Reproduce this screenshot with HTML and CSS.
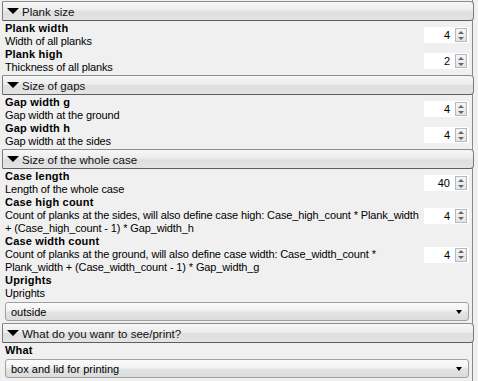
FILE: index.html
```html
<!DOCTYPE html>
<html>
<head>
<meta charset="utf-8">
<link rel="stylesheet" href="styles.css">
</head>
<body>
<div class="panel">
  <div class="section">
    <div class="head"><span class="tri"></span>Plank size</div>
    <div class="body">
      <div class="row">
        <div class="lbl"><div class="name">Plank width</div><div class="desc">Width of all planks</div></div>
        <div class="spin"><span class="val">4</span><span class="btns"><span class="up"></span><span class="dn"></span></span></div>
      </div>
      <div class="row">
        <div class="lbl"><div class="name">Plank high</div><div class="desc">Thickness of all planks</div></div>
        <div class="spin"><span class="val">2</span><span class="btns"><span class="up"></span><span class="dn"></span></span></div>
      </div>
    </div>
  </div>
  <div class="section">
    <div class="head"><span class="tri"></span>Size of gaps</div>
    <div class="body">
      <div class="row">
        <div class="lbl"><div class="name">Gap width g</div><div class="desc">Gap width at the ground</div></div>
        <div class="spin"><span class="val">4</span><span class="btns"><span class="up"></span><span class="dn"></span></span></div>
      </div>
      <div class="row">
        <div class="lbl"><div class="name">Gap width h</div><div class="desc">Gap width at the sides</div></div>
        <div class="spin"><span class="val">4</span><span class="btns"><span class="up"></span><span class="dn"></span></span></div>
      </div>
    </div>
  </div>
  <div class="section">
    <div class="head"><span class="tri"></span>Size of the whole case</div>
    <div class="body">
      <div class="row">
        <div class="lbl"><div class="name">Case length</div><div class="desc">Length of the whole case</div></div>
        <div class="spin"><span class="val">40</span><span class="btns"><span class="up"></span><span class="dn"></span></span></div>
      </div>
      <div class="row">
        <div class="lbl"><div class="name">Case high count</div><div class="desc">Count of planks at the sides, will also define case high: Case_high_count * Plank_width<br>+ (Case_high_count - 1) * Gap_width_h</div></div>
        <div class="spin"><span class="val">4</span><span class="btns"><span class="up"></span><span class="dn"></span></span></div>
      </div>
      <div class="row">
        <div class="lbl"><div class="name">Case width count</div><div class="desc">Count of planks at the ground, will also define case width: Case_width_count *<br>Plank_width + (Case_width_count - 1) * Gap_width_g</div></div>
        <div class="spin"><span class="val">4</span><span class="btns"><span class="up"></span><span class="dn"></span></span></div>
      </div>
      <div class="row col">
        <div class="lbl"><div class="name">Uprights</div><div class="desc">Uprights</div></div>
        <div class="combo">outside<span class="arrow"></span></div>
      </div>
    </div>
  </div>
  <div class="section">
    <div class="head"><span class="tri"></span>What do you wanr to see/print?</div>
    <div class="body">
      <div class="row col">
        <div class="lbl"><div class="name">What</div></div>
        <div class="combo">box and lid for printing<span class="arrow"></span></div>
      </div>
    </div>
  </div>
</div>
</body>
</html>
```

FILE: styles.css
```css
html, body {
  margin: 0;
  padding: 0;
  background: #f0f0f0;
}
body {
  font-family: "Liberation Sans", Arial, sans-serif;
  font-size: 11px;
  color: #000;
  width: 478px;
  height: 381px;
  overflow: hidden;
}
.panel {
  width: 471px;
  margin-left: 2px;
  border-right: 1px solid #8a8a8a;
  height: 381px;
  padding-top: 1px;
  box-sizing: border-box;
}
.head {
  height: 20px;
  box-sizing: border-box;
  border: 1px solid #7a7a7a;
  border-top-color: #8c8c8c;
  border-bottom-color: #5e5e5e;
  border-radius: 1px 4px 4px 1px;
  margin-right: -2px;
  background: linear-gradient(#f7f7f7, #ececec 45%, #dedede 55%, #e4e4e4);
  display: flex;
  align-items: center;
  padding-left: 4px;
  padding-top: 2px;
  color: #111;
  font-size: 11.5px;
}
.tri {
  width: 0;
  height: 0;
  border-left: 6px solid transparent;
  border-right: 6px solid transparent;
  border-top: 6px solid #000;
  margin-right: 3px;
  margin-top: -2px;
}
.body {
  padding: 1px 0;
}
.row {
  display: flex;
  align-items: center;
  padding: 0 3px 0 3px;
}
.row.col {
  flex-direction: column;
  align-items: stretch;
}
.lbl {
  flex: 1;
  line-height: 13px;
  white-space: nowrap;
}
.name {
  font-weight: bold;
  letter-spacing: 0.2px;
}
.desc {
  letter-spacing: -0.13px;
}
.spin {
  width: 45px;
  height: 16px;
  background: #fff;
  display: flex;
  align-items: center;
  justify-content: flex-end;
  box-sizing: border-box;
  padding-right: 2px;
}
.val {
  margin-right: 5px;
}
.btns {
  width: 12px;
  height: 14px;
  border: 1px solid #b4b9c4;
  box-sizing: border-box;
  display: flex;
  flex-direction: column;
  background: linear-gradient(#f6f6f6, #e4e4e4);
}
.btns span {
  flex: 1;
  display: flex;
  align-items: center;
  justify-content: center;
}
.up::after {
  content: "";
  border-left: 3px solid transparent;
  border-right: 3px solid transparent;
  border-bottom: 3px solid #666;
}
.dn::after {
  content: "";
  border-left: 3px solid transparent;
  border-right: 3px solid transparent;
  border-top: 3px solid #666;
}
.combo {
  height: 19px;
  margin: 2px 0 1px 0;
  box-sizing: border-box;
  border: 1px solid #a0a0a0;
  border-radius: 3px;
  background: linear-gradient(#fbfbfb, #f1f1f1 48%, #e3e3e3 52%, #dcdcdc);
  display: flex;
  align-items: center;
  padding-left: 5px;
  position: relative;
}
.arrow {
  position: absolute;
  right: 6px;
  top: 7px;
  border-left: 3px solid transparent;
  border-right: 3px solid transparent;
  border-top: 4px solid #000;
}
```
